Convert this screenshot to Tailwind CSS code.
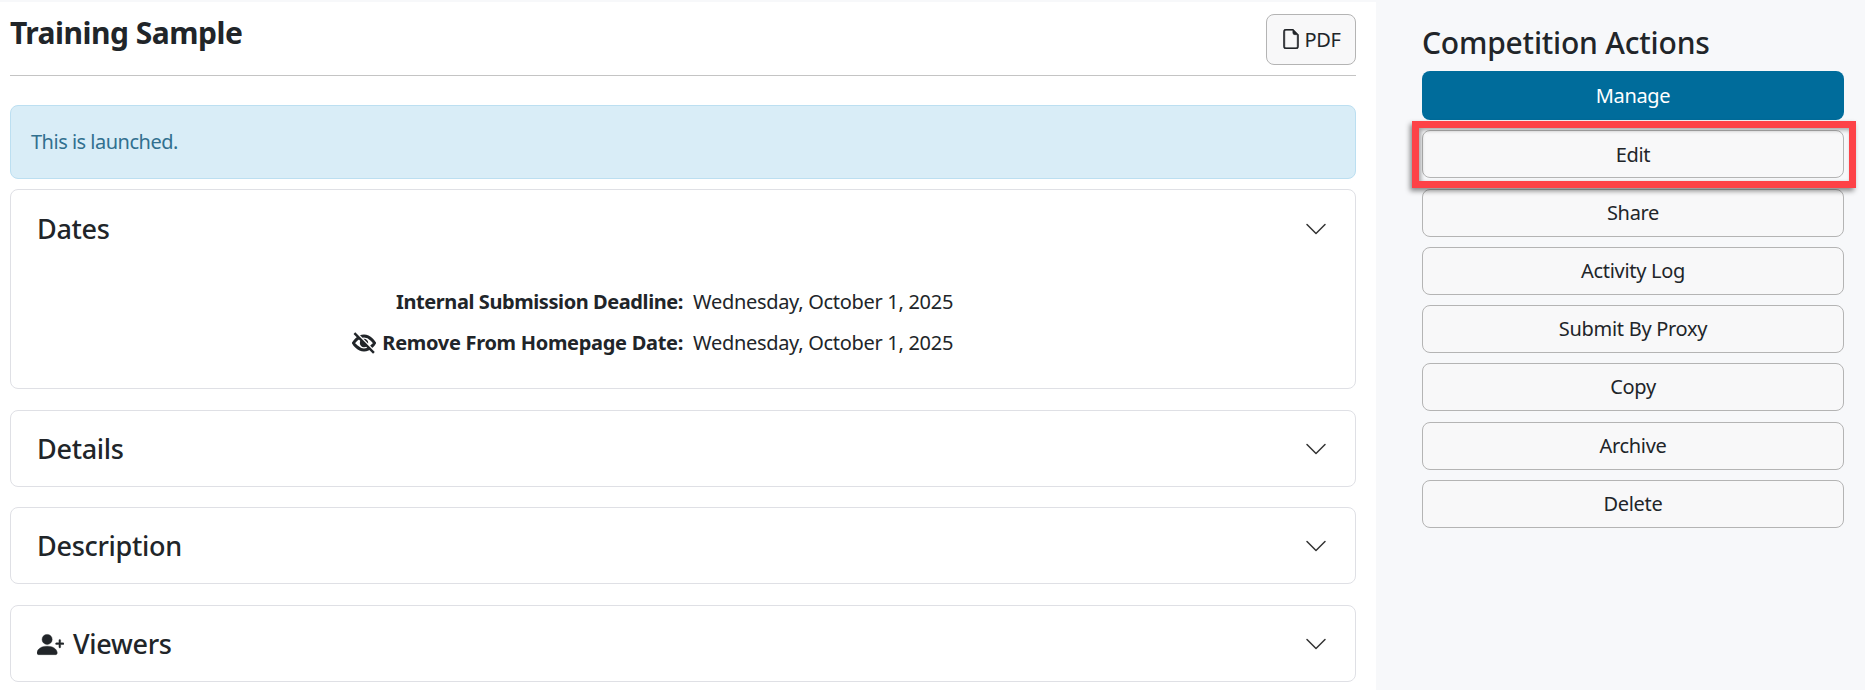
<!DOCTYPE html>
<html>
<head>
  <title>Training Sample</title>
  <script src="https://cdn.jsdelivr.net/npm/@tailwindcss/browser@4"></script>
</head>
<body class="bg-white font-['Noto_Sans',sans-serif] text-[#212529] h-[690px] overflow-hidden">
  <div class="h-[2px] bg-[#f7f8fa]"></div>
  <div class="flex h-[688px]">
    <!-- Main column -->
    <main class="w-[1376px] pl-[10px] pr-[20px]">
      <div class="flex justify-between h-[72.5px] border-b border-[#c4c4c4] box-content">
        <h1 class="text-[30px] leading-[34px] font-bold tracking-[-0.5px] mt-[14px]">Training Sample</h1>
        <button class="flex items-center justify-center gap-[3px] w-[90px] h-[51px] mt-[12px] bg-[#f8f8f9] border border-[#b4b4b4] rounded-[8px] text-[20px] tracking-[-0.3px]">
          <svg class="w-[20px] h-[20px] mb-[2px]" viewBox="0 0 16 16" fill="currentColor" stroke="currentColor" stroke-width="0.5"><path d="M14 4.5V14a2 2 0 0 1-2 2H4a2 2 0 0 1-2-2V2a2 2 0 0 1 2-2h5.5L14 4.5zm-3 0A1.5 1.5 0 0 1 9.5 3V1H4a1 1 0 0 0-1 1v12a1 1 0 0 0 1 1h8a1 1 0 0 0 1-1V4.5h-2z"/></svg>
          PDF
        </button>
      </div>

      <div class="mt-[29px] h-[74px] flex items-center pl-[20px] pt-[1px] bg-[#d9edf7] border border-[#bcdff1] rounded-[8px] text-[20px] tracking-[-0.5px] text-[#31708f]">This is launched.</div>

      <!-- Dates -->
      <section class="mt-[10px] h-[200px] border border-[#dfe0e5] rounded-[8px]">
        <div class="flex items-center justify-between h-[77px] pl-[26px] pr-[27px]">
          <h2 class="pt-[2px] text-[27px] font-medium tracking-[-0.3px]">Dates</h2>
          <svg class="mt-[1px] w-[24px] h-[24px] text-[#333]" viewBox="0 0 16 16" fill="currentColor"><path d="M1.646 4.646a.5.5 0 0 1 .708 0L8 10.293l5.646-5.647a.5.5 0 0 1 .708.708l-6 6a.5.5 0 0 1-.708 0l-6-6a.5.5 0 0 1 0-.708z"/></svg>
        </div>
        <div class="grid grid-cols-2 gap-x-[10px] gap-y-[13px] pl-[10px] text-[20px] leading-[28px] tracking-[-0.3px] mt-[21px]">
          <div class="text-right font-bold tracking-[-0.42px]">Internal Submission Deadline:</div>
          <div>Wednesday, October 1, 2025</div>
          <div class="flex items-center justify-end gap-[6px] font-bold">
            <svg class="w-[24px] h-[24px]" viewBox="0 0 16 16" fill="none" stroke="currentColor">
              <path d="M1 8S3.6 3.4 8 3.4 15 8 15 8 12.4 12.6 8 12.6 1 8 1 8z" stroke-width="2"/>
              <circle cx="8" cy="8" r="2.8" fill="currentColor" stroke="none"/>
              <path d="M3 1.2 15.4 13.9" stroke="#fff" stroke-width="1.1"/>
              <path d="M1.6 1.4 14.6 14.6" stroke-width="1.6"/>
            </svg>
            <span>Remove From Homepage Date:</span>
          </div>
          <div>Wednesday, October 1, 2025</div>
        </div>
      </section>

      <section class="mt-[21px] h-[77px] flex items-center justify-between pl-[26px] pr-[27px] border border-[#dfe0e5] rounded-[8px]">
        <h2 class="pt-[2px] text-[27px] font-medium tracking-[-0.3px]">Details</h2>
        <svg class="mt-[1px] w-[24px] h-[24px] text-[#333]" viewBox="0 0 16 16" fill="currentColor"><path d="M1.646 4.646a.5.5 0 0 1 .708 0L8 10.293l5.646-5.647a.5.5 0 0 1 .708.708l-6 6a.5.5 0 0 1-.708 0l-6-6a.5.5 0 0 1 0-.708z"/></svg>
      </section>

      <section class="mt-[20px] h-[77px] flex items-center justify-between pl-[26px] pr-[27px] border border-[#dfe0e5] rounded-[8px]">
        <h2 class="pt-[3px] text-[27px] font-medium tracking-[-0.3px]">Description</h2>
        <svg class="mt-[1px] w-[24px] h-[24px] text-[#333]" viewBox="0 0 16 16" fill="currentColor"><path d="M1.646 4.646a.5.5 0 0 1 .708 0L8 10.293l5.646-5.647a.5.5 0 0 1 .708.708l-6 6a.5.5 0 0 1-.708 0l-6-6a.5.5 0 0 1 0-.708z"/></svg>
      </section>

      <section class="mt-[21px] h-[77px] flex items-center justify-between pl-[26px] pr-[27px] border border-[#dfe0e5] rounded-[8px]">
        <h2 class="flex items-center gap-[9px] pt-[2px] text-[27px] font-medium tracking-[-0.3px]">
          <svg class="w-[27px] h-[27px]" viewBox="0 0 16 16" fill="currentColor" stroke="currentColor" stroke-width="0.25"><path d="M1 14s-1 0-1-1 1-4 6-4 6 3 6 4-1 1-1 1H1zm5-6a3 3 0 1 0 0-6 3 3 0 0 0 0 6z"/><path d="M13.5 5a.5.5 0 0 1 .5.5V7h1.5a.5.5 0 0 1 0 1H14v1.5a.5.5 0 0 1-1 0V8h-1.5a.5.5 0 0 1 0-1H13V5.5a.5.5 0 0 1 .5-.5z"/></svg>
          Viewers
        </h2>
        <svg class="mt-[1px] w-[24px] h-[24px] text-[#333]" viewBox="0 0 16 16" fill="currentColor"><path d="M1.646 4.646a.5.5 0 0 1 .708 0L8 10.293l5.646-5.647a.5.5 0 0 1 .708.708l-6 6a.5.5 0 0 1-.708 0l-6-6a.5.5 0 0 1 0-.708z"/></svg>
      </section>
    </main>

    <!-- Actions sidebar -->
    <aside class="flex-1 bg-[#f7f8fa] pl-[46px] pr-[21px]">
      <h2 class="text-[30px] leading-[36px] font-medium tracking-[-0.2px] mt-[23px] mb-[10px]">Competition Actions</h2>
      <div class="flex flex-col gap-[10.3px] text-[20px] tracking-[-0.3px]">
        <button class="h-[49px] bg-[#006c9b] text-white rounded-[8px]">Manage</button>
        <div class="relative">
          <button class="w-full h-[48px] pt-[1px] bg-[#f8f8f9] border border-[#b4b4b4] rounded-[8px]">Edit</button>
          <div class="absolute left-[-10px] right-[-12px] top-[-9px] bottom-[-10px] border-[7px] border-[#fd4247] shadow-[-2px_3px_5px_rgba(0,0,0,0.45),inset_2px_2px_4px_rgba(0,0,0,0.35)]"></div>
        </div>
        <button class="h-[48px] bg-[#f8f8f9] border border-[#b4b4b4] rounded-[8px]">Share</button>
        <button class="h-[48px] bg-[#f8f8f9] border border-[#b4b4b4] rounded-[8px]">Activity Log</button>
        <button class="h-[48px] bg-[#f8f8f9] border border-[#b4b4b4] rounded-[8px]">Submit By Proxy</button>
        <button class="h-[48px] bg-[#f8f8f9] border border-[#b4b4b4] rounded-[8px]">Copy</button>
        <button class="h-[48px] bg-[#f8f8f9] border border-[#b4b4b4] rounded-[8px]">Archive</button>
        <button class="h-[48px] bg-[#f8f8f9] border border-[#b4b4b4] rounded-[8px]">Delete</button>
      </div>
    </aside>
  </div>
</body>
</html>
